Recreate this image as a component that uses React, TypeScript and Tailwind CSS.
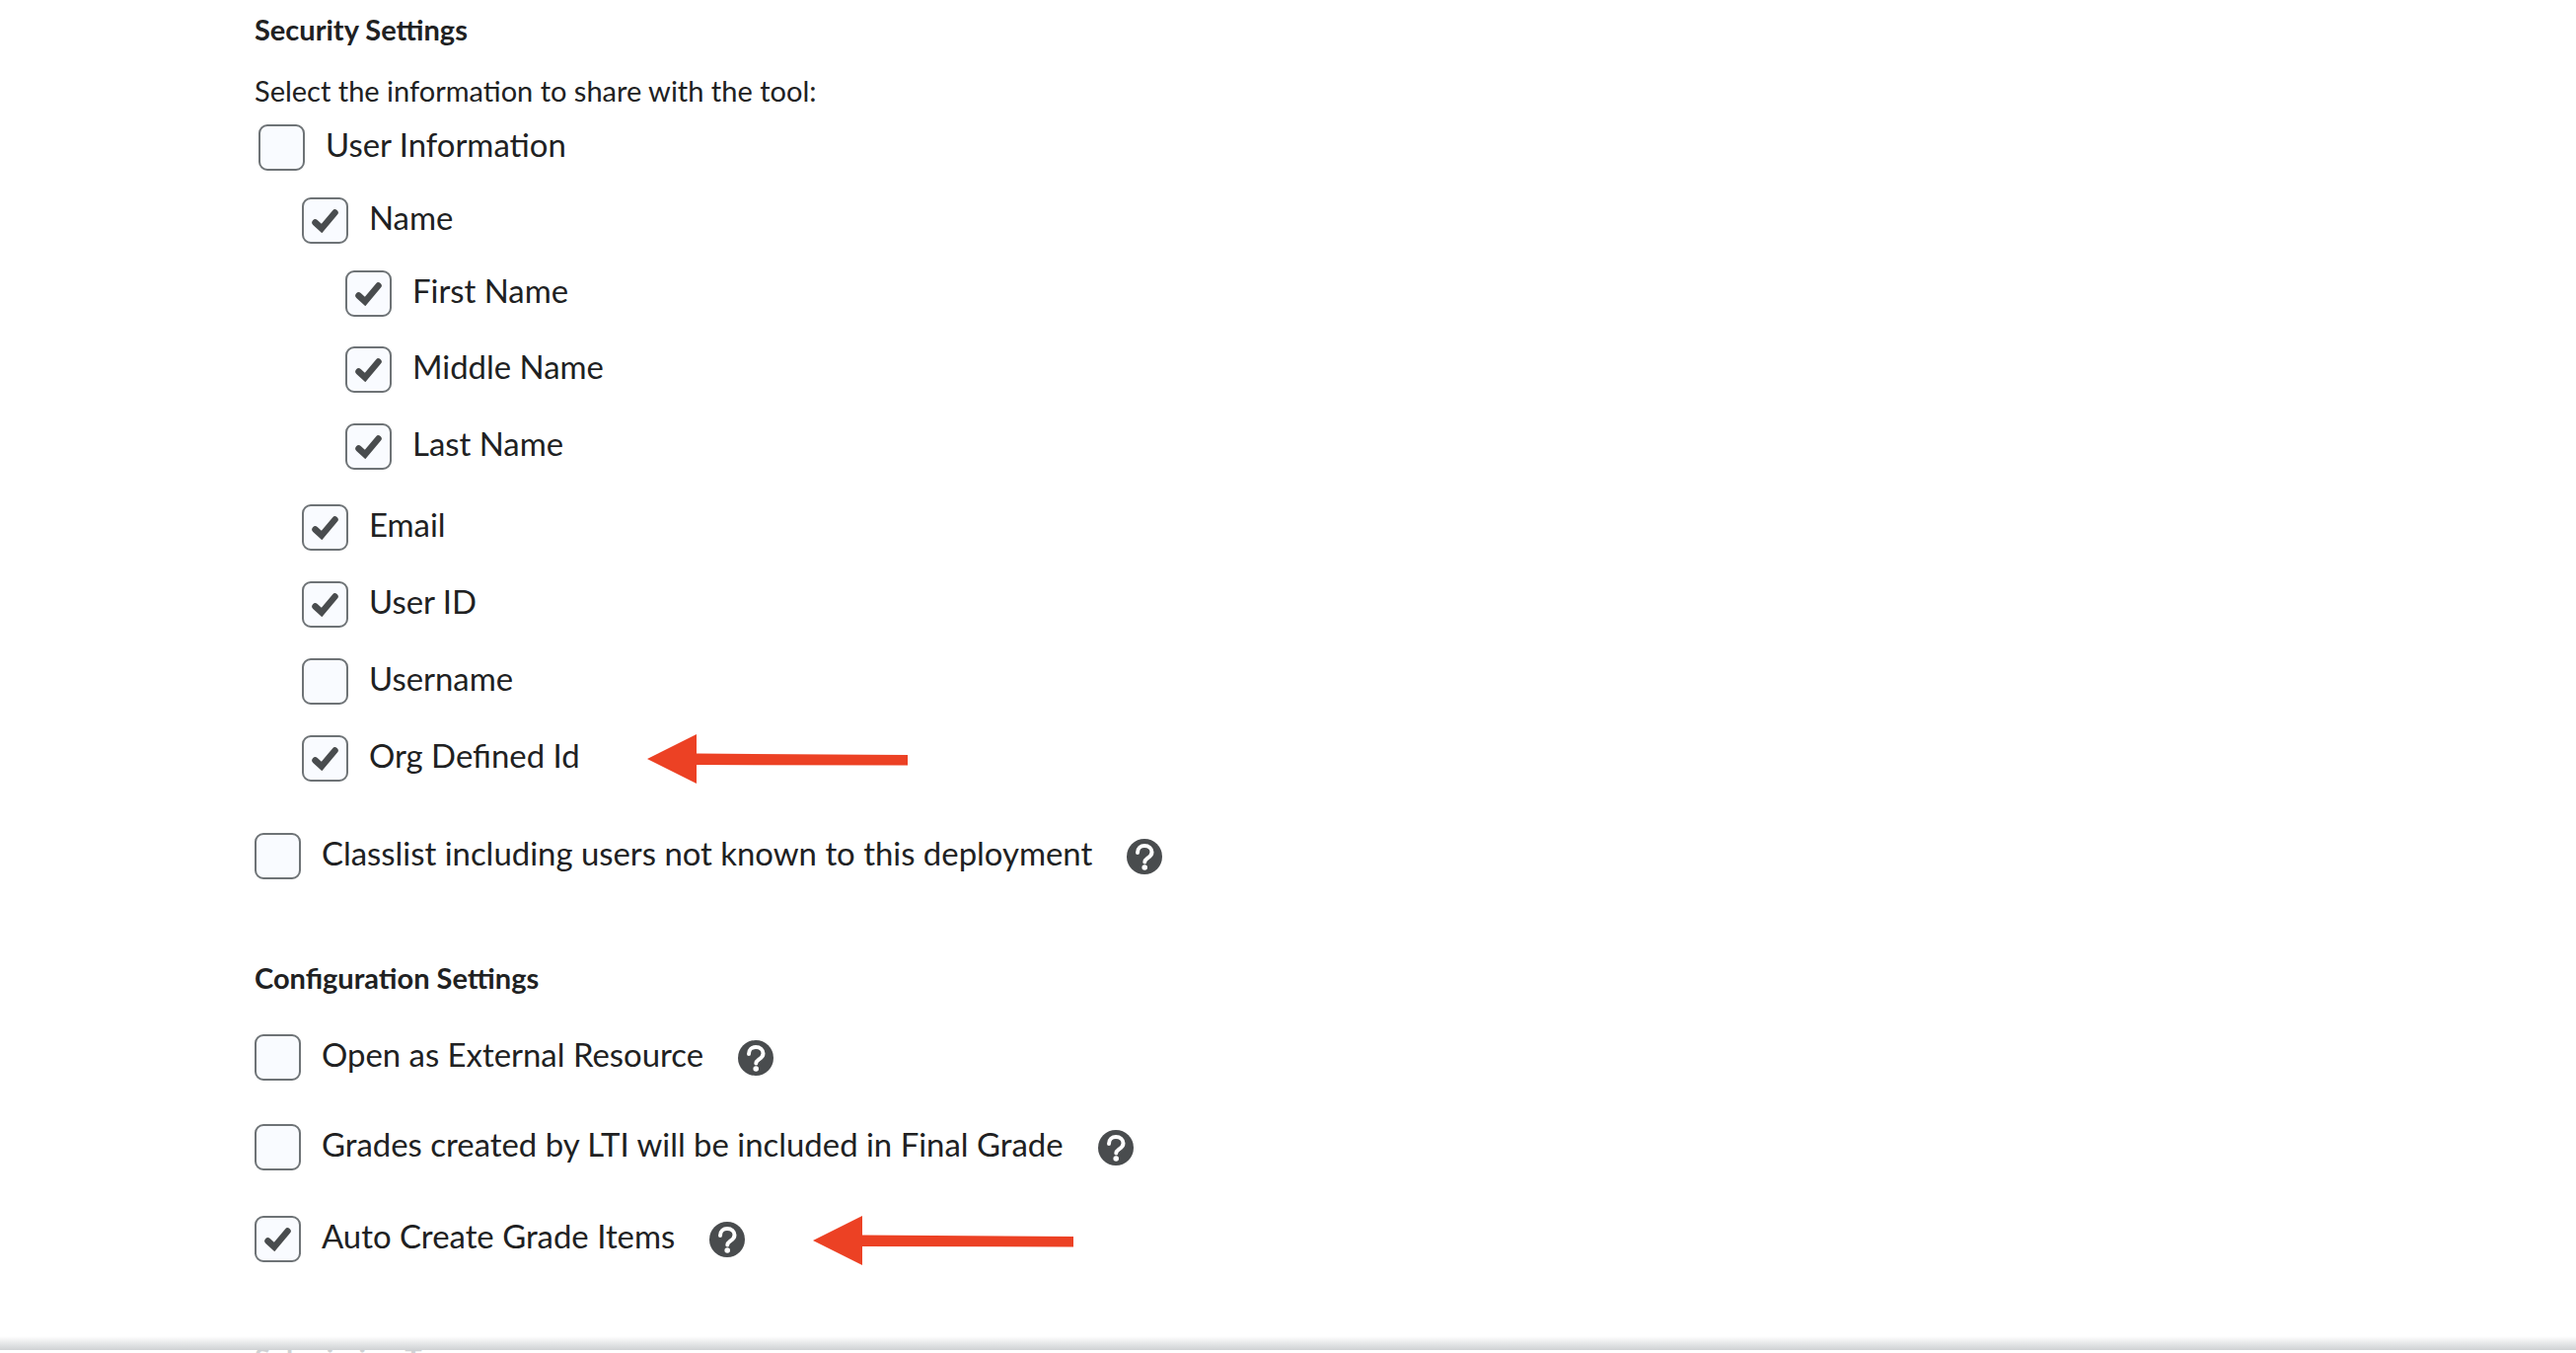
import type { ReactNode } from "react";

function Box({ checked }: { checked?: boolean }) {
  return (
    <span className="flex h-[47px] w-[47px] shrink-0 items-center justify-center rounded-[9px] border-2 border-[#6e7376] bg-[#f9fbff]">
      {checked && (
        <svg viewBox="0 0 28 24" className="h-[24px] w-[28px]">
          <path d="M3.5 13.5 L10 19.5 L23.5 3.5" fill="none" stroke="#494c4e" strokeWidth="6.5" strokeLinecap="round" strokeLinejoin="miter" />
        </svg>
      )}
    </span>
  );
}

function Help() {
  return (
    <svg viewBox="0 0 36 36" className="h-[36px] w-[36px] shrink-0">
      <circle cx="18" cy="18" r="18" fill="#494c4e" />
      <path d="M11 14 C11 9.5 14.5 7 18 7 C22.5 7 25.5 10 25.5 13.6 C25.5 17 23 18.3 20.8 19.8 C19.2 20.9 18.3 21.8 18.3 23.5" fill="none" stroke="#fff" strokeWidth="4" strokeLinecap="round" />
      <circle cx="18.2" cy="29" r="2.8" fill="#fff" />
    </svg>
  );
}

function Arrow() {
  return (
    <svg viewBox="0 0 264 50" className="h-[50px] w-[264px] shrink-0">
      <path d="M0 25 L50 0 L50 19.5 L264 21 L264 31.5 L50 31 L50 50 Z" fill="#ec4124" />
    </svg>
  );
}

function Row({ checked, label, className, children }: { checked?: boolean; label: string; className: string; children?: ReactNode }) {
  return (
    <div className={`flex h-[47px] items-center ${className}`}>
      <Box checked={checked} />
      <span className="relative top-[-3px] ml-[21px] whitespace-nowrap text-[32.9px] leading-[47px] text-[#202122]">{label}</span>
      {children}
    </div>
  );
}

export default function App() {
  return (
    <div className="relative h-[1371px] w-full overflow-hidden bg-white pl-[258px] font-['Lato','Open_Sans',sans-serif]">
      {/* Security */}
      <h3 className="pt-[13px] text-[29px] font-bold leading-[34px] text-[#202122]">Security Settings</h3>
      <p className="mt-[28px] text-[29px] leading-[34px] text-[#202122]">Select the information to share with the tool:</p>

      <Row label="User Information" className="ml-[4px] mt-[17px]" />
      <Row checked label="Name" className="ml-[48px] mt-[27px]" />
      <Row checked label="First Name" className="ml-[92px] mt-[27px]" />
      <Row checked label="Middle Name" className="ml-[92px] mt-[30px]" />
      <Row checked label="Last Name" className="ml-[92px] mt-[31px]" />
      <Row checked label="Email" className="ml-[48px] mt-[35px]" />
      <Row checked label="User ID" className="ml-[48px] mt-[31px]" />
      <Row label="Username" className="ml-[48px] mt-[31px]" />
      <Row checked label="Org Defined Id" className="ml-[48px] mt-[31px]">
        <span className="ml-[68px]">
          <Arrow />
        </span>
      </Row>
      <Row label="Classlist including users not known to this deployment" className="mt-[52px]">
        <span className="ml-[35px]">
          <Help />
        </span>
      </Row>

      {/* Configuration */}
      <h3 className="mt-[83px] text-[29px] font-bold leading-[34px] text-[#202122]">Configuration Settings</h3>
      <Row label="Open as External Resource" className="mt-[40px]">
        <span className="ml-[35px]">
          <Help />
        </span>
      </Row>
      <Row label="Grades created by LTI will be included in Final Grade" className="mt-[44px]">
        <span className="ml-[35px]">
          <Help />
        </span>
      </Row>
      <Row checked label="Auto Create Grade Items" className="mt-[46px]">
        <span className="ml-[35px]">
          <Help />
        </span>
        <span className="ml-[69px] mt-[3px]">
          <Arrow />
        </span>
      </Row>

      {/* Sticky footer edge, next section peeks out below it */}
      <div className="absolute bottom-0 left-0 right-0 h-[3px] overflow-hidden bg-white pl-[258px]">
        <div className="-mt-[9px] text-[29px] font-bold leading-[34px] text-[#cfd2d4]">Submission Type</div>
      </div>
      <div className="absolute bottom-[3px] left-0 right-0 h-[14px] bg-gradient-to-b from-white to-[#cfd2d4]" />
    </div>
  );
}
